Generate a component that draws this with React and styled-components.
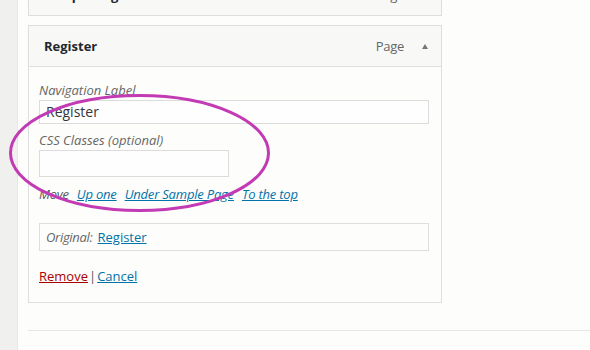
import React from "react";
import styled, { createGlobalStyle } from "styled-components";

const GlobalStyle = createGlobalStyle`
  html, body { margin: 0; padding: 0; }
  body {
    background: #fdfdfb;
    font-family: "Open Sans", "Noto Sans", sans-serif;
    font-size: 13px;
    color: #444;
    overflow: hidden;
  }
`;

const Screen = styled.div`
  position: relative;
  display: flex;
  width: 590px;
  height: 350px;
  overflow: hidden;
`;

const Sidebar = styled.div`
  width: 17px;
  flex: none;
  background: #f0f0ee;
  border-right: 1px solid #e6e6e4;
`;

const Main = styled.div`
  flex: 1;
  padding-left: 10px;
  display: flex;
  flex-direction: column;
`;

const MenuList = styled.div`
  margin-top: -26px;
  display: flex;
  flex-direction: column;
  gap: 9px;
`;

const Item = styled.div`
  width: 414px;
  display: flex;
  flex-direction: column;
`;

const Handle = styled.div`
  box-sizing: border-box;
  height: 42px;
  display: flex;
  align-items: center;
  padding: 0 13px 0 15px;
  background: #f8f9f7;
  border: 1px solid #dedede;
`;

const Title = styled.span`
  flex: 1;
  font-weight: 700;
  color: #23282d;
`;

const Type = styled.span`
  color: #666;
  letter-spacing: -0.3px;
  margin-right: 18px;
`;

const Arrow = styled.span`
  width: 0;
  height: 0;
  border-left: 3.5px solid transparent;
  border-right: 3.5px solid transparent;
  border-${(p) => (p.$open ? "bottom" : "top")}: 5px solid #72777c;
`;

const Settings = styled.div`
  box-sizing: border-box;
  height: 236px;
  padding: 14px 10px 0;
  background: #fdfdfb;
  border: 1px solid #dedede;
  border-top: none;
  display: flex;
  flex-direction: column;
`;

const FieldLabel = styled.label`
  display: block;
  font-style: italic;
  color: #666;
  line-height: 18px;
`;

const TextInput = styled.div`
  box-sizing: border-box;
  width: ${(p) => p.$width}px;
  height: ${(p) => p.$height}px;
  margin-top: 1px;
  margin-bottom: ${(p) => p.$mb}px;
  padding: 0 6px;
  border: 1px solid #dcdcdc;
  background: #fefefe;
  color: #32373c;
  font-size: 14px;
  line-height: ${(p) => p.$height - 2}px;
`;

const MoveRow = styled.div`
  display: flex;
  gap: 8px;
  font-style: italic;
  color: #555;
  line-height: 18px;
  letter-spacing: -0.2px;
`;

const Link = styled.a`
  color: ${(p) => (p.$danger ? "#a00" : "#0073aa")};
  text-decoration: underline;
  cursor: pointer;
`;

const OriginalBox = styled.div`
  box-sizing: border-box;
  width: 390px;
  height: 28px;
  margin-top: 20px;
  padding: 0 6px;
  border: 1px solid #dedede;
  display: flex;
  align-items: center;
  gap: 5px;
`;

const OriginalLabel = styled.span`
  font-style: italic;
  color: #666;
  letter-spacing: -0.3px;
`;

const Actions = styled.div`
  margin-top: 16px;
  line-height: 18px;
  color: #555;
  display: flex;
  gap: 1px;
`;

const BottomRule = styled.div`
  margin-top: 27px;
  height: 1px;
  background: #e6e6e4;
`;

const Annotation = styled.svg`
  position: absolute;
  left: 0;
  top: 0;
  pointer-events: none;
`;

export default function App() {
  return (
    <>
      <GlobalStyle />
      <Screen>
        <Sidebar />
        <Main>
          <MenuList>
            <Item>
              <Handle>
                <Title>Sample Page</Title>
                <Type>Page</Type>
                <Arrow />
              </Handle>
            </Item>
            <Item>
              <Handle>
                <Title>Register</Title>
                <Type>Page</Type>
                <Arrow $open />
              </Handle>
              <Settings>
                <FieldLabel>Navigation Label</FieldLabel>
                <TextInput $width={390} $height={24} $mb={7}>Register</TextInput>
                <FieldLabel>CSS Classes (optional)</FieldLabel>
                <TextInput $width={190} $height={27} $mb={8} />
                <MoveRow>
                  <span>Move</span>
                  <Link>Up one</Link>
                  <Link>Under Sample Page</Link>
                  <Link>To the top</Link>
                </MoveRow>
                <OriginalBox>
                  <OriginalLabel>Original:</OriginalLabel>
                  <Link>Register</Link>
                </OriginalBox>
                <Actions>
                  <Link $danger>Remove</Link>
                  <span>|</span>
                  <Link>Cancel</Link>
                </Actions>
              </Settings>
            </Item>
          </MenuList>
          <BottomRule />
        </Main>
        <Annotation width="590" height="350">
          <ellipse cx="139.5" cy="153" rx="129" ry="57.5" fill="none" stroke="#c23ab4" strokeWidth="3" />
        </Annotation>
      </Screen>
    </>
  );
}
